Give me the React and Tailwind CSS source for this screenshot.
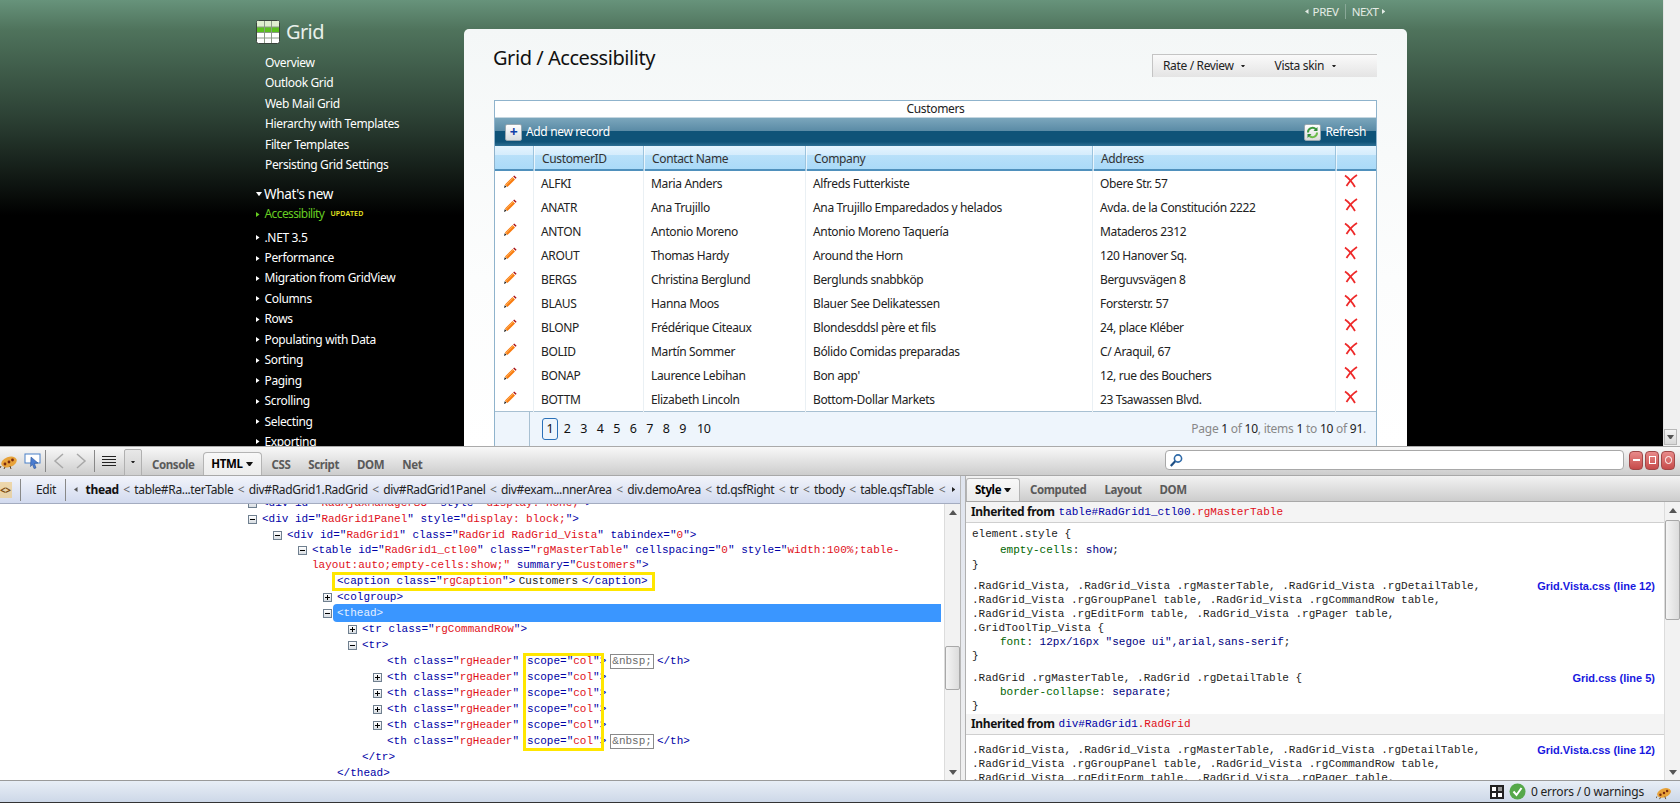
import React from 'react';

const sans = "font-['Noto_Sans',sans-serif] tracking-[-0.35px]";
const mono = "font-['Liberation_Mono',monospace] text-[11px] tracking-normal";
const tabLabel = 'text-[11.5px] font-bold text-[#5a5a5a] tracking-[-0.4px]';

const Pencil = () => (
  <svg width="14" height="14" viewBox="0 0 14 14" className="shrink-0">
    <path d="M1 13l.8-3L3.6 11.8z" fill="#222" />
    <path d="M2 9.6L9.6 2l2.4 2.4L4.4 12z" fill="#f97c10" />
    <path d="M2.8 10.4L10.2 3" stroke="#ffb35c" strokeWidth="1" />
    <path d="M10.2 1.4l1-1 2.4 2.4-1 1z" fill="#a80f14" />
  </svg>
);

const Cross = () => (
  <svg width="14" height="14" viewBox="0 0 14 14" className="shrink-0">
    <path d="M1 1.5C4 3.5 8 8 11 13" stroke="#ee2a2a" strokeWidth="1.8" fill="none" />
    <path d="M13 1C9 3.5 5 8 2.5 12" stroke="#ee2a2a" strokeWidth="1.8" fill="none" />
  </svg>
);

const Tri = ({ dir = 'right', color = '#fff', size = 3 }) => {
  const s = size;
  const cls = { right: `0,0 ${s * 1.4},${s} 0,${s * 2}`, left: `${s * 1.4},0 0,${s} ${s * 1.4},${s * 2}`, down: `0,0 ${s * 2},0 ${s},${s * 1.4}` };
  const w = dir === 'down' ? s * 2 : s * 1.4;
  const h = dir === 'down' ? s * 1.4 : s * 2;
  return (
    <svg width={w} height={h} className="shrink-0">
      <polygon points={cls[dir]} fill={color} />
    </svg>
  );
};

const GridLogo = () => (
  <svg width="24" height="24" viewBox="0 0 24 24" className="shrink-0">
    <rect x="0.5" y="0.5" width="23" height="23" rx="2" fill="#fff" stroke="#39443c" />
    <rect x="1" y="1" width="22" height="6" fill="#dfeecf" />
    <rect x="1" y="7" width="22" height="5.5" fill="#5cc01f" />
    <path d="M1 7h22M1 12.5h22M1 18h22M8.5 1v22M15.5 1v22" stroke="#8b9a86" strokeWidth="1" />
  </svg>
);

const Bug = ({ w = 18 }) => (
  <svg width={w} height={w} viewBox="0 0 18 18" className="shrink-0">
    <ellipse cx="9" cy="10" rx="8" ry="5" fill="#e8a33a" transform="rotate(-20 9 10)" />
    <circle cx="5" cy="12" r="1.4" fill="#7a2a10" />
    <circle cx="9" cy="10" r="1.4" fill="#7a2a10" />
    <circle cx="12.5" cy="8" r="1.4" fill="#7a2a10" />
    <path d="M1 14l-1 2M5 15l-1 2M10 14l1 3" stroke="#5a4020" strokeWidth="1" />
  </svg>
);

const Toggle = ({ open }) => (
  <span className="w-[9px] h-[9px] border border-[#6f7f8f] bg-gradient-to-b from-white to-[#d8dde2] flex items-center justify-center relative shrink-0">
    <span className="w-[5px] h-px bg-black" />
    {!open && <span className="absolute w-px h-[5px] bg-black" />}
  </span>
);

// quoted parts of the markup go red, everything else is tag blue
const Markup = ({ s }) => {
  const parts = s.split('"');
  return (
    <span className="text-[#0000a6] whitespace-pre">
      {parts.map((p, i) =>
        i % 2 === 1 ? (
          <span key={i}>
            "<span className="text-[#e0101a]">{p}</span>
            {i < parts.length - 1 ? '"' : ''}
          </span>
        ) : (
          <span key={i}>{p}</span>
        )
      )}
    </span>
  );
};

const Nbsp = () => (
  <span className="border border-[#8a8a8a] text-[#6b6b6b] px-[1px] mx-[3px] h-[15px] leading-[13px] inline-block">&amp;nbsp;</span>
);

const rows = [
  ['ALFKI', 'Maria Anders', 'Alfreds Futterkiste', 'Obere Str. 57'],
  ['ANATR', 'Ana Trujillo', 'Ana Trujillo Emparedados y helados', 'Avda. de la Constitución 2222'],
  ['ANTON', 'Antonio Moreno', 'Antonio Moreno Taquería', 'Mataderos 2312'],
  ['AROUT', 'Thomas Hardy', 'Around the Horn', '120 Hanover Sq.'],
  ['BERGS', 'Christina Berglund', 'Berglunds snabbköp', 'Berguvsvägen 8'],
  ['BLAUS', 'Hanna Moos', 'Blauer See Delikatessen', 'Forsterstr. 57'],
  ['BLONP', 'Frédérique Citeaux', 'Blondesddsl père et fils', '24, place Kléber'],
  ['BOLID', 'Martín Sommer', 'Bólido Comidas preparadas', 'C/ Araquil, 67'],
  ['BONAP', 'Laurence Lebihan', "Bon app'", '12, rue des Bouchers'],
  ['BOTTM', 'Elizabeth Lincoln', 'Bottom-Dollar Markets', '23 Tsawassen Blvd.'],
];

const cols = 'grid grid-cols-[39px_110px_162px_287px_243px_40px]';

const topLinks = ['Overview', 'Outlook Grid', 'Web Mail Grid', 'Hierarchy with Templates', 'Filter Templates', 'Persisting Grid Settings'];
const sections = ['.NET 3.5', 'Performance', 'Migration from GridView', 'Columns', 'Rows', 'Populating with Data', 'Sorting', 'Paging', 'Scrolling', 'Selecting', 'Exporting'];

const Sidebar = () => (
  <div className={`w-[464px] shrink-0 pl-[256px] pt-[20px] text-white text-[12px] ${sans}`}>
    <div className="flex items-center gap-[6px] h-[24px]">
      <GridLogo />
      <span className="text-[20px] text-[#e8f0ea] tracking-[-0.6px]">Grid</span>
    </div>
    <div className="pl-[9px] pt-[9px]">
      {topLinks.map((l) => (
        <div key={l} className="h-[20.4px] leading-[20px]">{l}</div>
      ))}
    </div>
    <div className="flex items-center gap-[3px] mt-[9px] h-[20px]">
      <Tri dir="down" size={3} />
      <span className="text-[13.5px] ml-[-1px]">What's new</span>
    </div>
    <div className="flex items-center h-[20px]">
      <Tri color="#66cc22" size={2.5} />
      <span className="ml-[5px] text-[#66cc22] tracking-[-0.6px]">Accessibility</span>
      <span className="ml-[6px] text-[7px] text-[#e8e820] tracking-[0.2px] font-semibold">UPDATED</span>
    </div>
    <div className="mt-[3px]">
      {sections.map((l) => (
        <div key={l} className="flex items-center h-[20.45px]">
          <Tri size={2.5} />
          <span className="ml-[5px]">{l}</span>
        </div>
      ))}
    </div>
  </div>
);

const GridTable = () => (
  <div className={`w-[883px] h-[346px] border border-[#8fb3cc] border-b-[#9fb4c4] border-b-2 bg-white text-[12px] text-[#222] ${sans}`}>
    <div className="h-[16px] text-center leading-[16px]">Customers</div>
    <div className="h-[29px] flex items-center justify-between pl-[10px] pr-[10px] text-white border-t border-[#c4d6e0] bg-[linear-gradient(180deg,#7ba6bc_0%,#598aa5_48%,#0f5378_48%,#0f5378_85%,#2f7094_100%)]">
      <div className="flex items-center gap-[4px]">
        <span className="w-[17px] h-[17px] rounded-[2px] bg-gradient-to-b from-white to-[#d8dde0] border border-[#98a8b0] flex items-center justify-center text-[#1040a8] font-bold text-[14px] leading-none">+</span>
        <span>Add new record</span>
      </div>
      <div className="flex items-center gap-[4px]">
        <span className="w-[17px] h-[17px] rounded-[2px] bg-gradient-to-b from-white to-[#dcdcdc] border border-[#98a8b0] flex items-center justify-center">
          <svg width="13" height="13" viewBox="0 0 13 13">
            <path d="M2 6.5A4.5 4.5 0 0 1 10 3.5" stroke="#3f9a3f" strokeWidth="2" fill="none" />
            <path d="M11 6.5A4.5 4.5 0 0 1 3 9.5" stroke="#6cbc4a" strokeWidth="2" fill="none" />
            <path d="M11.5 1v4h-4zM1.5 12V8h4z" fill="#2f8a3a" />
          </svg>
        </span>
        <span>Refresh</span>
      </div>
    </div>
    <div className={`${cols} h-[25px] border-b-2 border-[#4f90bc] bg-[linear-gradient(180deg,#e4f4fe_0%,#d4ecfc_40%,#b8e0f9_40%,#aadaf8_100%)] text-[#333]`}>
      {['', 'CustomerID', 'Contact Name', 'Company', 'Address', ''].map((h, i) => (
        <div key={i} className={`pl-[7px] leading-[26px] ${i < 5 ? 'border-r border-r-[#9cc4de]' : ''} ${i > 0 ? 'border-l border-l-white/70' : ''}`}>{h}</div>
      ))}
    </div>
    {rows.map((r) => (
      <div key={r[0]} className={`${cols} h-[24px]`}>
        <div className="border-r border-[#eaf0f4] pl-[8px] pt-[4px]"><Pencil /></div>
        {r.map((c, i) => (
          <div key={i} className="border-r border-[#eaf0f4] pl-[7px] leading-[26px] whitespace-nowrap">{c}</div>
        ))}
        <div className="pl-[8px] pt-[3px]"><Cross /></div>
      </div>
    ))}
    <div className="h-[35px] border-t border-[#a8c0d2] bg-[#eef5fc] flex">
      <div className="w-[35px] border-r border-[#a8c0d2]" />
      <div className="flex-1 flex items-center justify-between pl-[12px] pr-[10px]">
        <div className="flex items-center text-[#111] text-[12.5px]">
          <span className="w-[16px] h-[22px] border border-[#2a70b8] rounded-[3px] flex items-center justify-center mr-[1px]">1</span>
          {[2, 3, 4, 5, 6, 7, 8, 9].map((n) => (
            <span key={n} className="w-[16.5px] text-center">{n}</span>
          ))}
          <span className="ml-[6px]">10</span>
        </div>
        <div className="text-[#888] tracking-[-0.25px]">
          Page <b className="font-normal text-[#222]">1</b> of <b className="font-normal text-[#222]">10</b>, items <b className="font-normal text-[#222]">1</b> to <b className="font-normal text-[#222]">10</b> of <b className="font-normal text-[#222]">91</b>.
        </div>
      </div>
    </div>
  </div>
);

const Content = () => (
  <div className={`w-[943px] shrink-0 flex flex-col ${sans}`}>
    <div className="h-[29px] flex justify-end items-start pr-[22px] pt-[4px]">
      <div className="h-[15px] flex items-center text-[11.5px] text-[#e4ece6]">
        <Tri dir="left" size={2.5} color="#e4ece6" />
        <span className="ml-[4px]">PREV</span>
        <span className="w-px h-[15px] bg-[#8aa898] mx-[6px]" />
        <span>NEXT</span>
        <span className="ml-[3px]"><Tri size={2.5} color="#e4ece6" /></span>
      </div>
    </div>
    <div className="flex-1 rounded-t-[5px] bg-[linear-gradient(180deg,#f4f7f7_0%,#fcfdfd_60%,#ffffff_100%)] pl-[30px]">
      <div className="flex justify-between items-start h-[71px]">
        <h1 className="text-[20px] leading-[28px] mt-[15px] ml-[-1px] font-normal text-[#111] tracking-[-0.45px]">Grid / Accessibility</h1>
        <div className="w-[225px] h-[23px] mt-[25px] mr-[30px] border-l border-t border-[#c4c4c4] bg-gradient-to-b from-[#fafafa] to-[#e4e4e4] flex items-center text-[12px] text-[#222]">
          <span className="ml-[10px]">Rate / Review</span>
          <span className="ml-[7px]"><Tri dir="down" color="#222" size={2} /></span>
          <span className="ml-[30px]">Vista skin</span>
          <span className="ml-[8px]"><Tri dir="down" color="#222" size={2} /></span>
        </div>
      </div>
      <GridTable />
    </div>
  </div>
);

const PageScroll = () => (
  <div className="w-[17px] ml-auto bg-[#f0f0f0] flex flex-col justify-end border-l border-[#e4e4e4]">
    <div className="w-[13px] h-[16px] mb-[1px] border border-[#b8b8b8] bg-gradient-to-b from-[#f4f4f4] to-[#d8d8d8] flex items-center justify-center">
      <Tri dir="down" color="#555" size={3.5} />
    </div>
  </div>
);

const Toolbar = () => (
  <div className={`h-[30px] shrink-0 flex items-center border-t border-[#aaa] border-b border-b-[#a8a8a8] bg-gradient-to-b from-[#f8f8f8] to-[#cdcdcd] ${sans}`}>
    <Bug />
    <svg width="18" height="18" viewBox="0 0 18 18" className="ml-[6px]">
      <rect x="1" y="2" width="15" height="9" fill="#fff" stroke="#4a80c8" />
      <path d="M7 5l7 6-3.5.4L12 16l-2 .6-1.5-4-2 2z" fill="#4a7cd0" stroke="#20488c" strokeWidth="0.5" />
    </svg>
    <span className="w-px h-[22px] bg-[#888] ml-[3px]" />
    <svg width="12" height="16" viewBox="0 0 12 16" className="ml-[7px]"><path d="M10 1L2 8l8 7" fill="none" stroke="#a8a8a8" strokeWidth="1.5" /></svg>
    <svg width="12" height="16" viewBox="0 0 12 16" className="ml-[10px]"><path d="M2 1l8 7-8 7" fill="none" stroke="#a8a8a8" strokeWidth="1.5" /></svg>
    <span className="w-px h-[22px] bg-[#888] ml-[7px]" />
    <svg width="14" height="12" viewBox="0 0 14 12" className="ml-[7px]"><path d="M0 1.5h14M0 4.5h14M0 7.5h14M0 10.5h14" stroke="#222" strokeWidth="1" /></svg>
    <span className="w-[18px] h-[27px] mt-[2px] ml-[8px] border border-[#b0b0b0] rounded-t-[2px] bg-gradient-to-b from-[#e8e8e8] to-[#d0d0d0] flex items-center justify-center">
      <Tri dir="down" color="#222" size={2} />
    </span>
    <span className={`ml-[10px] mt-[8px] ${tabLabel}`}>Console</span>
    <span className="ml-[8px] w-[59px] h-[23px] self-end border border-b-0 border-[#b4b4b4] rounded-t-[4px] bg-gradient-to-b from-[#f8f8f8] to-[#ececec] flex items-center justify-center gap-[3px] text-[11.5px] font-bold text-black">
      HTML <Tri dir="down" color="#111" size={3.5} />
    </span>
    <span className={`ml-[10px] mt-[8px] ${tabLabel}`}>CSS</span>
    <span className={`ml-[18px] mt-[8px] ${tabLabel}`}>Script</span>
    <span className={`ml-[18px] mt-[8px] ${tabLabel}`}>DOM</span>
    <span className={`ml-[18px] mt-[8px] ${tabLabel}`}>Net</span>
    <div className="ml-auto w-[459px] h-[20px] rounded-[4px] border border-[#a8a8a8] bg-white flex items-center pl-[3px] mt-[-2px]">
      <svg width="15" height="15" viewBox="0 0 15 15">
        <circle cx="9" cy="5.5" r="3.6" fill="none" stroke="#2f6aa8" strokeWidth="1.6" />
        <path d="M6.2 8.2L1.8 13" stroke="#1d4f86" strokeWidth="2.2" />
      </svg>
    </div>
    <div className="flex gap-[2px] ml-[5px] mr-[5px] mt-[-2px]">
      {['min', 'restore', 'close'].map((b) => (
        <span key={b} className="w-[14px] h-[19px] rounded-[4px] border border-[#a04848] bg-gradient-to-b from-[#e88a8a] to-[#c64a4a] flex items-center justify-center">
          {b === 'min' && <span className="w-[7px] h-[2px] bg-white" />}
          {b === 'restore' && <span className="w-[7px] h-[8px] border border-white" />}
          {b === 'close' && <span className="w-[7px] h-[8px] rounded-full border border-white" />}
        </span>
      ))}
    </div>
  </div>
);

const crumbs = ['table#Ra...terTable', 'div#RadGrid1.RadGrid', 'div#RadGrid1Panel', 'div#exam...nnerArea', 'div.demoArea', 'td.qsfRight', 'tr', 'tbody', 'table.qsfTable'];

const Breadcrumb = () => (
  <div className={`h-[28px] shrink-0 flex items-center overflow-hidden border-b border-[#a4acc0] bg-gradient-to-b from-[#f2f4fb] to-[#d2daee] text-[12px] text-[#222] ${sans}`}>
    <span className="w-[12px] h-[16px] text-[#7a4a10] text-[10px] font-bold leading-[16px] bg-[#f0c878]/60">&lt;&gt;</span>
    <span className="w-px h-[22px] bg-[#888] ml-[8px]" />
    <span className="ml-[15px]">Edit</span>
    <span className="w-px h-[22px] bg-[#888] ml-[9px]" />
    <span className="ml-[8px]"><Tri dir="left" color="#555" size={2.5} /></span>
    <b className="ml-[8px] font-bold text-[#111]">thead</b>
    {crumbs.map((c) => (
      <span key={c} className="whitespace-nowrap">
        <span className="text-[#666] mx-[4.5px]">&lt;</span>{c}
      </span>
    ))}
    <span className="text-[#666] ml-[5px]">&lt;</span>
    <span className="ml-auto mr-[5px]"><Tri color="#222" size={2.5} /></span>
  </div>
);

const th = '<th class="rgHeader"';

const htmlLines = [
  { x: 262, open: true, s: '<div id="RadGrid1Panel" style="display: block;">' },
  { x: 287, open: true, s: '<div id="RadGrid1" class="RadGrid RadGrid_Vista" tabindex="0">' },
  { x: 312, open: true, h: 15, s: '<table id="RadGrid1_ctl00" class="rgMasterTable" cellspacing="0" style="width:100%;table-' },
  { x: 312, h: 15, red: 'layout:auto;empty-cells:show;"', tail: ' summary="Customers">' },
  { x: 337, caption: true },
  { x: 337, open: false, s: '<colgroup>' },
  { x: 337, open: true, s: '<thead>', selected: true },
  { x: 362, open: false, s: '<tr class="rgCommandRow">' },
  { x: 362, open: true, s: '<tr>' },
  { x: 387, s: th, scope: true, nbsp: true },
  { x: 387, open: false, s: th, scope: true },
  { x: 387, open: false, s: th, scope: true },
  { x: 387, open: false, s: th, scope: true },
  { x: 387, open: false, s: th, scope: true },
  { x: 387, s: th, scope: true, nbsp: true },
  { x: 362, s: '</tr>' },
  { x: 337, s: '</thead>' },
];

const HtmlLine = ({ line }) => (
  <div
    className={`flex items-center relative whitespace-pre ${line.h === 15 ? 'h-[15px]' : 'h-[16px]'}`}
    style={{ paddingLeft: line.x }}
  >
    {line.selected && <span className="absolute left-[333px] right-[3px] top-[-1px] h-[18px] rounded-l-[4px] bg-[#3a96ff]" />}
    {line.open !== undefined && (
      <span className="absolute" style={{ left: line.x - 14 }}>
        <Toggle open={line.open} />
      </span>
    )}
    {line.caption ? (
      <span className="text-[#0000a6]">
        &lt;caption class="<span className="text-[#e0101a]">rgCaption</span>"&gt;<span className="text-[#222] mx-[3.5px]">Customers</span>&lt;/caption&gt;
      </span>
    ) : line.red ? (
      <span className="text-[#e0101a]">
        {line.red}
        <Markup s={line.tail} />
      </span>
    ) : line.selected ? (
      <span className="relative text-[#e4f0ff]">{line.s}</span>
    ) : (
      <Markup s={line.s} />
    )}
    {line.scope && (
      <span className="ml-[8px]">
        <Markup s={'scope="col">'} />
      </span>
    )}
    {line.nbsp && (
      <span className="flex items-center ml-[1px]">
        <Nbsp />
        <span className="text-[#0000a6]">&lt;/th&gt;</span>
      </span>
    )}
  </div>
);

const HtmlPane = () => (
  <div className={`w-[944px] relative overflow-hidden bg-white ${mono}`}>
    <div className="mt-[-9px] h-[16px] flex items-center pl-[262px] relative">
      <span className="absolute left-[248px]"><Toggle open /></span>
      <Markup s={'<div id="RadAjaxManagerSU" style="display: none;">'} />
    </div>
    {htmlLines.map((l, i) => (
      <HtmlLine key={i} line={l} />
    ))}
    {/* yellow markers drawn on top of the markup */}
    <span className="absolute left-[332px] top-[68px] w-[323px] h-[19px] border-[3px] border-[#ffe600]" />
    <span className="absolute left-[523px] top-[149px] w-[81px] h-[98px] border-[3px] border-[#ffe600]" />
  </div>
);

const VScroll = ({ thumbTop, thumbH }) => (
  <div className="w-[16px] shrink-0 relative bg-[#f2f2f2] border-l border-[#dcdcdc]">
    <div className="h-[16px] flex items-center justify-center">
      <svg width="8" height="5"><polygon points="4,0 8,5 0,5" fill="#555" /></svg>
    </div>
    <div className="absolute left-0 right-0 border border-[#a8a8a8] rounded-[2px] bg-gradient-to-r from-[#f4f4f4] to-[#dcdcdc]" style={{ top: thumbTop, height: thumbH }} />
    <div className="absolute bottom-0 left-0 right-0 h-[16px] flex items-center justify-center">
      <svg width="8" height="5"><polygon points="0,0 8,0 4,5" fill="#555" /></svg>
    </div>
  </div>
);

const Source = ({ children }) => (
  <span className="absolute right-[9px] top-[0px] font-['Liberation_Sans',sans-serif] font-bold text-[11px] text-[#1818e0]">{children}</span>
);

const Sel = ({ children, src, first }) => (
  <div className={`${first ? 'h-[15.5px] leading-[15.5px]' : 'h-[14px] leading-[14px]'} pl-[6px] whitespace-pre relative text-[#222]`}>
    {children}
    {src && <Source>{src}</Source>}
  </div>
);

const Prop = ({ name, value, first }) => (
  <div className={`${first ? 'h-[15.5px] leading-[15.5px]' : 'h-[14px] leading-[14px]'} pl-[34px] whitespace-pre`}>
    <span className="text-[#006400]">{name}</span><span className="text-[#222]">: </span><span className="text-[#000080]">{value}</span><span className="text-[#222]">;</span>
  </div>
);

const Inherited = ({ children }) => (
  <div className="h-[21px] flex items-center pl-[5px] bg-[#f4f4f4] border-b border-[#cfcfcf]">
    <span className={`font-bold text-[12px] text-[#111] mr-[4px] ${sans}`}>Inherited from</span>
    {children}
  </div>
);

const StylePane = () => (
  <div className={`flex-1 flex flex-col min-w-0 border-l border-[#b0b0b0] ${mono}`}>
    <div className={`h-[26px] shrink-0 flex items-end border-b border-[#a8a8a8] bg-gradient-to-b from-[#f2f2f2] to-[#cdcdcd] ${sans}`}>
      <span className="w-[54px] h-[23px] border border-b-0 border-[#b4b4b4] rounded-t-[3px] bg-gradient-to-b from-[#f8f8f8] to-[#ececec] flex items-center justify-center gap-[3px] text-[11.5px] font-bold text-black tracking-[-0.4px]">
        Style <Tri dir="down" color="#111" size={3.5} />
      </span>
      <span className={`ml-[10px] mb-[3px] ${tabLabel}`}>Computed</span>
      <span className={`ml-[18px] mb-[3px] ${tabLabel}`}>Layout</span>
      <span className={`ml-[18px] mb-[3px] ${tabLabel}`}>DOM</span>
    </div>
    <div className="flex flex-1 min-h-0">
      <div className="flex-1 min-w-0 overflow-hidden bg-white">
        <Inherited>
          <span className="text-[#0000a6]">table#RadGrid1_ctl00</span><span className="text-[#e0101a]">.rgMasterTable</span>
        </Inherited>
        <div className="pt-[4px]">
          <Sel first>element.style {'{'}</Sel>
          <Prop first name="empty-cells" value="show" />
          <Sel first>{'}'}</Sel>
        </div>
        <div className="pt-[5.5px]">
          <Sel src="Grid.Vista.css (line 12)">.RadGrid_Vista, .RadGrid_Vista .rgMasterTable, .RadGrid_Vista .rgDetailTable,</Sel>
          <Sel>.RadGrid_Vista .rgGroupPanel table, .RadGrid_Vista .rgCommandRow table,</Sel>
          <Sel>.RadGrid_Vista .rgEditForm table, .RadGrid_Vista .rgPager table,</Sel>
          <Sel>.GridToolTip_Vista {'{'}</Sel>
          <Prop name="font" value={'12px/16px "segoe ui",arial,sans-serif'} />
          <Sel>{'}'}</Sel>
        </div>
        <div className="pt-[8px] pb-[1px]">
          <Sel src="Grid.css (line 5)">.RadGrid .rgMasterTable, .RadGrid .rgDetailTable {'{'}</Sel>
          <Prop name="border-collapse" value="separate" />
          <Sel>{'}'}</Sel>
        </div>
        <Inherited>
          <span className="text-[#0000a6]">div#RadGrid1</span><span className="text-[#e0101a]">.RadGrid</span>
        </Inherited>
        <div className="pt-[8px]">
          <Sel src="Grid.Vista.css (line 12)">.RadGrid_Vista, .RadGrid_Vista .rgMasterTable, .RadGrid_Vista .rgDetailTable,</Sel>
          <Sel>.RadGrid_Vista .rgGroupPanel table, .RadGrid_Vista .rgCommandRow table,</Sel>
          <Sel>.RadGrid_Vista .rgEditForm table, .RadGrid_Vista .rgPager table,</Sel>
        </div>
      </div>
      <VScroll thumbTop={18} thumbH={100} />
    </div>
  </div>
);

const StatusBar = () => (
  <div className={`h-[23px] shrink-0 flex items-center justify-end border-t border-[#9a9a9a] border-b border-b-[#333] bg-gradient-to-b from-[#e8eef6] to-[#cdd8e8] text-[12px] text-[#222] ${sans}`}>
    <svg width="14" height="14" viewBox="0 0 14 14"><rect width="14" height="14" fill="#222" /><rect x="2" y="2" width="4" height="4" fill="#fff" /><rect x="8" y="2" width="4" height="4" fill="#999" /><rect x="2" y="8" width="4" height="4" fill="#fff" /><rect x="8" y="8" width="4" height="4" fill="#fff" /></svg>
    <svg width="17" height="17" viewBox="0 0 17 17" className="ml-[5px]">
      <circle cx="8.5" cy="8.5" r="8" fill="#55a84a" />
      <path d="M4.5 8.5l3 3.5 5-7" fill="none" stroke="#fff" strokeWidth="2" />
    </svg>
    <span className="ml-[5px] tracking-[-0.2px]">0 errors / 0 warnings</span>
    <span className="ml-[12px] mr-[8px]"><Bug w={16} /></span>
  </div>
);

export default function App() {
  return (
    <div className="w-[1680px] h-[803px] overflow-hidden flex flex-col bg-white">
      <div className="h-[446px] shrink-0 flex bg-[linear-gradient(180deg,#67937b_0%,#4f735c_30px,#2b3f33_120px,#000000_215px)]">
        <Sidebar />
        <Content />
        <PageScroll />
      </div>
      <Toolbar />
      <div className="flex flex-1 min-h-0">
        <div className="w-[960px] shrink-0 flex flex-col min-h-0 overflow-hidden">
          <Breadcrumb />
          <div className="flex flex-1 min-h-0">
            <HtmlPane />
            <VScroll thumbTop={142} thumbH={44} />
          </div>
        </div>
        <div className="w-[5px] shrink-0 bg-gradient-to-b from-[#dfe4ee] to-[#f0f0f0] border-l border-[#b8b8b8]" />
        <StylePane />
      </div>
      <StatusBar />
    </div>
  );
}
